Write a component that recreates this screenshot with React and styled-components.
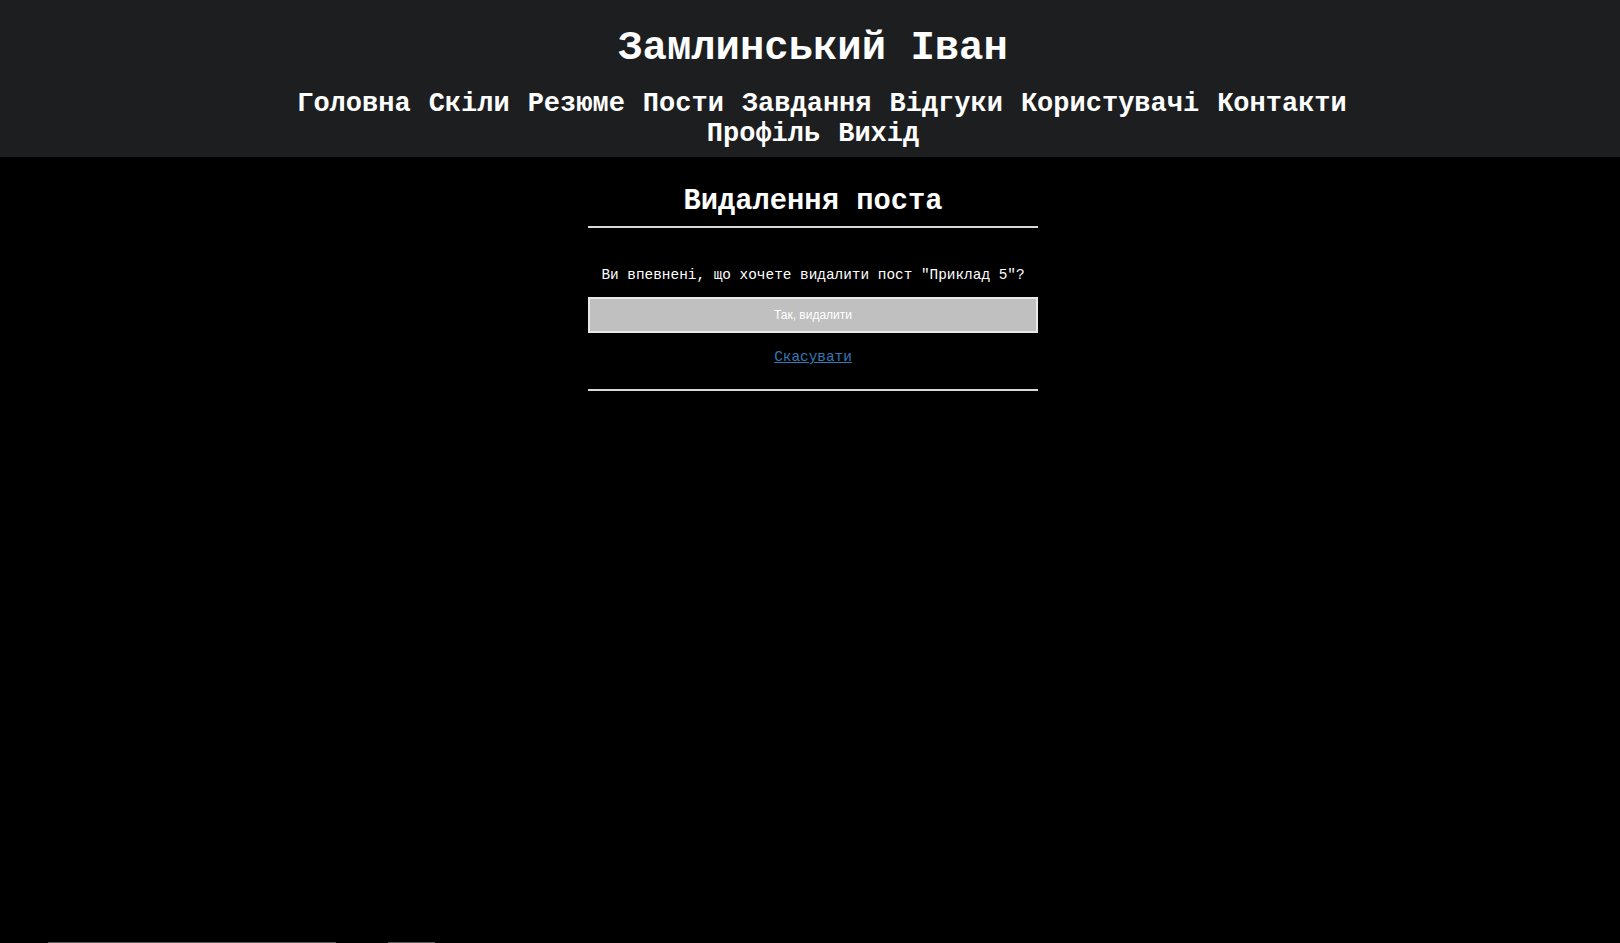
import styled, { createGlobalStyle } from 'styled-components'

const GlobalStyle = createGlobalStyle`
  html, body {
    margin: 0;
    padding: 0;
    background: #000;
  }

  body {
    font-family: 'Liberation Mono', 'Courier New', monospace;
    color: #fff;
  }
`

const Screen = styled.div`
  display: flex;
  flex-direction: column;
  min-height: calc(100vh - 1px);
`

const Header = styled.header`
  display: flex;
  flex-direction: column;
  align-items: center;
  padding: 25px 0 8px 6px;
  background-color: #1d1e20;
`

const SiteTitle = styled.h1`
  margin: 0 0 18px;
  font-size: 40.6px;
  font-weight: bold;
  color: #fff;
`

const Nav = styled.nav`
  display: flex;
  flex-wrap: wrap;
  justify-content: center;
  column-gap: 18px;
  max-width: 1140px;
`

const NavLink = styled.a`
  font-size: 27px;
  font-weight: bold;
  color: #fff;
  text-decoration: none;
  white-space: nowrap;

  &:first-child {
    margin-left: 18px;
  }
`

const Main = styled.main`
  flex: 1;
  padding-left: 6px;
`

const Card = styled.section`
  display: flex;
  flex-direction: column;
  align-items: center;
  width: 450px;
  margin: 28px auto 0;
`

const Heading = styled.h2`
  margin: 0 0 8px;
  font-size: 28.8px;
  font-weight: bold;
`

const Rule = styled.hr`
  align-self: stretch;
  margin: 0;
  border: none;
  border-top: 2px solid #d9d9d9;
`

const Question = styled.p`
  margin: 39px 0 14px;
  font-size: 14.4px;
`

const DeleteButton = styled.button`
  align-self: stretch;
  height: 36px;
  border: 2px solid #e8e8e8;
  background-color: #c0c0c0;
  color: #fff;
  font-family: 'Liberation Sans', Arial, sans-serif;
  font-size: 12px;
  cursor: pointer;
`

const CancelLink = styled.a`
  margin: 16px 0 24px;
  font-size: 14.4px;
  color: #337ab7;
  text-decoration: underline;
`

const Footer = styled.footer`
  display: flex;
  gap: 52px;
  padding-left: 48px;
`

const FooterBar = styled.div`
  width: ${p => p.$w}px;
  height: 20px;
  background-color: #5a5a5a;
`

const links = ['Головна', 'Скіли', 'Резюме', 'Пости', 'Завдання', 'Відгуки', 'Користувачі', 'Контакти', 'Профіль', 'Вихід']

const App = () => {
  return (
    <>
      <GlobalStyle />
      <Screen>
        <Header>
          <SiteTitle>Замлинський Іван</SiteTitle>
          <Nav>
            {links.map(l => (
              <NavLink key={l} href="#">{l}</NavLink>
            ))}
          </Nav>
        </Header>

        <Main>
          <Card>
            <Heading>Видалення поста</Heading>
            <Rule />
            <Question>Ви впевнені, що хочете видалити пост "Приклад 5"?</Question>
            <DeleteButton type="button">Так, видалити</DeleteButton>
            <CancelLink href="#">Скасувати</CancelLink>
            <Rule />
          </Card>
        </Main>
      </Screen>

      <Footer>
        <FooterBar $w={288} />
        <FooterBar $w={47} />
      </Footer>
    </>
  )
}

export default App
